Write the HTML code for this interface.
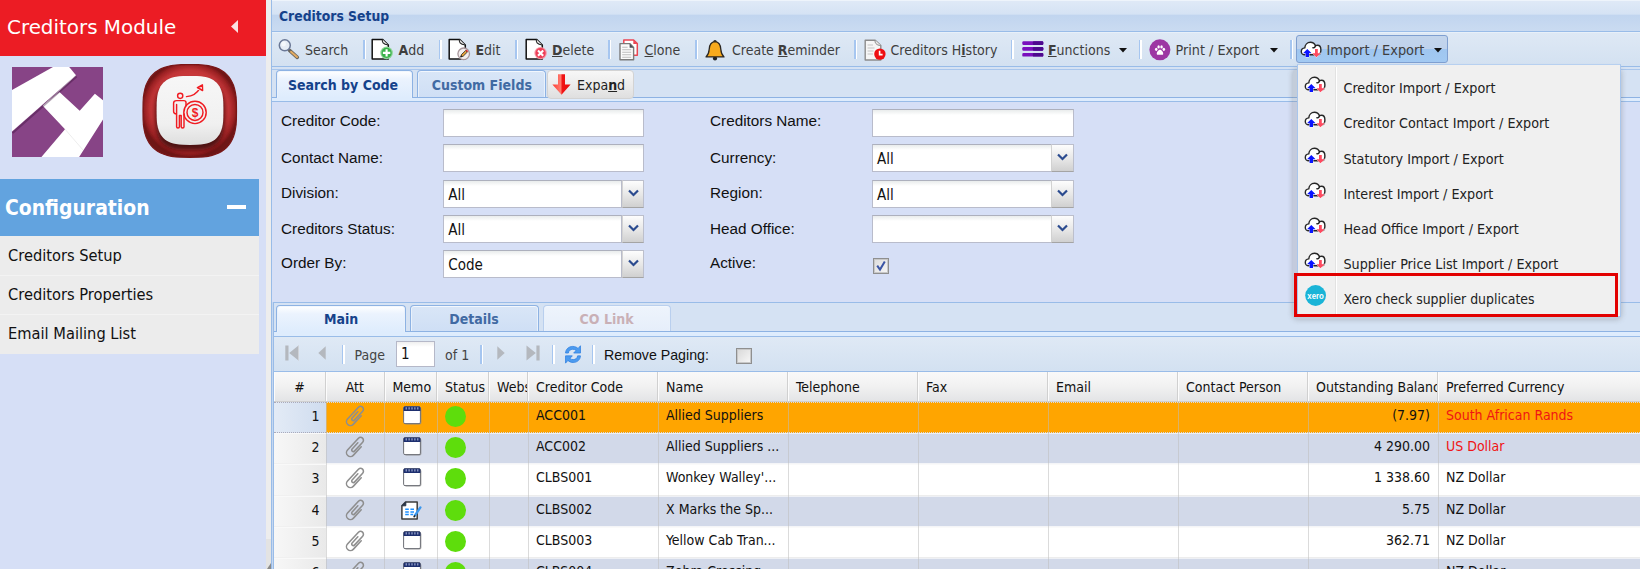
<!DOCTYPE html>
<html>
<head>
<meta charset="utf-8">
<title>Creditors Setup</title>
<style>
*{box-sizing:border-box;margin:0;padding:0}
html,body{width:1640px;height:569px;overflow:hidden;background:#d6dff6}
body{position:relative;font-family:"DejaVu Sans Condensed","DejaVu Sans","Liberation Sans",sans-serif;font-size:14px;color:#222}
.abs{position:absolute}
/* ---------- sidebar ---------- */
#side{left:0;top:0;width:266px;height:569px;background:#d6dff6}
#sidehead{left:0;top:0;width:266px;height:56px;background:#ec1c24}
#sidehead .t{left:7px;top:15px;font:19.9px/26px "DejaVu Sans","Liberation Sans",sans-serif;color:#fff;white-space:nowrap}
#cfg{left:0;top:179px;width:259px;height:57px;background:#62a3df}
#cfg .t{left:5px;top:14.6px;font:bold 20.9px/28px "DejaVu Sans Condensed","DejaVu Sans","Liberation Sans",sans-serif;color:#fff;white-space:nowrap}
#cfg .minus{left:227px;top:25.6px;width:18.5px;height:4.4px;background:#fff}
#menu{left:0;top:236px;width:259px;height:117.5px;background:#ececec}
#menu div{position:absolute;left:0;width:259px;height:39px;padding-left:8px;font:16.3px/40px "DejaVu Sans Condensed","DejaVu Sans","Liberation Sans",sans-serif;color:#111;white-space:nowrap}
#split{left:266px;top:0;width:5px;height:569px;background:#ededed}
/* ---------- main panel ---------- */
#main{left:271px;top:0;width:1369px;height:569px;background:#d6dff6;border-left:1px solid #99bce8}
#ptitle{left:272px;top:0;width:1368px;height:31px;background:linear-gradient(#e0eaf7 0,#d5e3f4 45%,#c1d5ef 50%,#cadbf1 100%);box-shadow:inset 0 1px 0 #eef4fb}
#ptitle .t{left:7px;top:8.4px;font:bold 13.8px/16px "DejaVu Sans Condensed","DejaVu Sans","Liberation Sans",sans-serif;color:#15428b;white-space:nowrap}
#tbar{left:272px;top:31px;width:1368px;height:36px;background:linear-gradient(#dfe9f5,#d3e1f1);border-bottom:1px solid #99bce8;box-shadow:inset 0 1px 0 #99bce8,inset 0 2px 0 #e8f0f9}
.tb{position:absolute;top:1px;height:35px;font:14px/36px "DejaVu Sans Condensed","Liberation Sans",sans-serif;color:#3e3e3e;white-space:nowrap}
.tb u{font-weight:bold}
.sep{position:absolute;top:9px;width:3px;height:19px;background:linear-gradient(90deg,#a6c6f0 0,#a6c6f0 50%,#fff 50%,#fff 100%);margin-left:-0.5px}

.ic{position:absolute}
#tabs1{left:272px;top:67px;width:1368px;height:35px;background:#d5e2f3}
.tabline{position:absolute;left:0;width:1368px}
.tab{position:absolute;height:27px;border:1px solid #8db2e3;border-bottom:none;border-radius:4px 4px 0 0;background:linear-gradient(#d9e6f7,#cfdff5);font:bold 14px/16px "DejaVu Sans Condensed","DejaVu Sans","Liberation Sans",sans-serif;color:#416aa3;text-align:center;white-space:nowrap;padding-top:5.8px;box-shadow:inset 0 1px 0 #f2f7fd,inset 1px 0 0 #e9f1fb,inset -1px 0 0 #e9f1fb}
.tab.act{background:linear-gradient(#ffffff 0,#ebf3fe 30%,#deecfd 100%);color:#15428b;height:28px}
.tab.dis{color:#c9b0b6;background:linear-gradient(#eef4fc,#e6eefa);border-color:#b9cfee}
#form{left:272px;top:102px;width:1368px;height:200px;background:#d6dff6}
.lbl{position:absolute;margin-top:-0.7px;font:15.3px/18px "Liberation Sans",sans-serif;color:#111;white-space:nowrap}
.inp{position:absolute;height:27.6px;background:linear-gradient(#e9ecec 0,#fff 5px,#fff 100%);border:1px solid #b9bccb;border-top-color:#adb0bd;font:15px/29px "DejaVu Sans Condensed","Liberation Sans",sans-serif;color:#111;padding-left:4px;white-space:nowrap}
.trg{position:absolute;width:22px;height:27.6px;background:linear-gradient(#fdfdfd,#e6e6e6 55%,#d0d0d0);border:1px solid #bcbfcc;border-left:1px solid #d2d2d2;border-bottom-color:#a4a4a4}
.trg svg{position:absolute;left:5px;top:8px}

#tabs2{left:274px;top:302px;width:1366px;height:35px;background:#d5e2f3}
#pbar{left:274px;top:337px;width:1366px;height:35px;background:linear-gradient(#dfe9f5,#d3e1f1);border-bottom:1px solid #99bce8}
#gframe{left:272px;top:302px;width:2px;height:267px;background:#c5d7f0;border-right:1px solid #99bce8}
#ghead{left:274px;top:372px;width:1366px;height:30px;background:linear-gradient(#f9f9f9 0,#f1f1f1 50%,#e3e4e6 100%);border-bottom:1px solid #d0d0d0}
.gh{position:absolute;top:0;height:29px;border-right:1px solid #d0d0d0;box-shadow:inset 1px 0 0 #fcfcfc;font:14px/30.5px "DejaVu Sans Condensed","Liberation Sans",sans-serif;color:#111;padding-left:8px;white-space:nowrap;overflow:hidden}
#gbody{left:274px;top:402px;width:1366px;height:167px;background:#fff;overflow:hidden}
.gr{position:absolute;left:0;width:1366px;background:#fff;border-top:1px solid #fafafa;border-bottom:1px solid #ededed}
.gr.alt{background:#d2d9e9;border-top-color:#eef0f5;border-bottom-color:#f4f5f8}
.gr.sel{background:#ffa500;border-top:1px dotted #d6dbe6;border-bottom:1px dotted #d6dbe6}
.num{position:absolute;left:0;top:-1px;bottom:-1px;width:52px;background:linear-gradient(90deg,#f7f7f7,#e9e9e9);border-top:1px solid #f9f9f9;border-bottom:1px solid #f0f0f0;text-align:right;padding-right:6.5px;font:14px/26.5px "DejaVu Sans Condensed","Liberation Sans",sans-serif;color:#111}
.gr.sel .num{background:linear-gradient(90deg,#e3ebf6,#cfdcef);border-top:1px dotted #aab;border-bottom:1px dotted #aab}
.gc{position:absolute;top:0;height:29px;padding-left:8px;font:14px/24.5px "DejaVu Sans Condensed","Liberation Sans",sans-serif;color:#111;white-space:nowrap;overflow:hidden}
.dot{position:absolute;left:171px;top:3.2px;width:21px;height:21px;border-radius:50%;background:#5edd0c}
.vl{position:absolute;top:0;width:1px;height:167px;background:rgba(190,190,190,.55)}

#ddshadow{left:1293px;top:69px;width:1330px;height:250px;width:328px;border-radius:5px;box-shadow:0 0 5px 1px rgba(100,100,100,.3);background:rgba(130,130,130,.22)}
#dd{left:1297px;top:64px;width:324px;height:253px;background:#f0f0f0;border:1px solid #a9c6ec;border-top-color:#b7d0f0;overflow:hidden}
#dd .gut{position:absolute;left:37px;top:2px;bottom:2px;width:2px;background:#e2e2e2;border-right:1px solid #fff}
.mi{position:absolute;left:45.5px;height:35px;font:14.2px/35px "DejaVu Sans Condensed","Liberation Sans",sans-serif;color:#222;white-space:nowrap}
#redbox{left:1294px;top:273px;width:324px;height:44px;border:3px solid #e20000}
</style>
</head>
<body>
<svg width="0" height="0" style="position:absolute"><defs>
<g id="cloud"><path d="M4.4 13.3C2 13.3 0.8 11.7 0.8 10C0.8 8 2.2 6.6 4.3 6.4C4.5 3.2 6.8 0.8 9.9 0.8C12.4 0.8 14.2 2.2 15 4.2C15.6 3.9 16.3 3.8 17 3.8C19.4 3.8 20.4 6 20.4 8.4C20.4 11.2 19 13.3 16.6 13.3Z" fill="#fff" stroke="#262626" stroke-width="1.4" stroke-linejoin="round"/><path d="M12.4 6.3C13.5 6.6 14.6 5.6 15 4.2" fill="none" stroke="#1d1d1d" stroke-width="1.4" stroke-linecap="round"/><path d="M6.8 7.4L11.1 11.8H8.5V15.5H5.1V11.8H2.5Z" fill="#0a14ff" stroke="#fff" stroke-width="0.7" paint-order="stroke"/><path d="M14.5 7.6H17.3V11.7H20.2L15.9 15.8L11.8 11.7H14.5Z" fill="#ff4a60" stroke="#fff" stroke-width="0.7" paint-order="stroke"/></g>
</defs></svg>
<div id="side" class="abs"></div>
<div id="sidehead" class="abs"><div class="t abs">Creditors Module</div>
<svg class="abs" style="left:230px;top:19px" width="9" height="15" viewBox="0 0 9 15"><path d="M8 1 L1 7.5 L8 14 Z" fill="#fbdfe0"/></svg>
</div>
<svg class="abs" style="left:12px;top:66.5px" width="91" height="90.5" viewBox="0 0 91 90.5"><rect width="91" height="90.5" fill="#874486"/>
<path d="M47.4 24.9L67.7 43.7L82.9 26.8L91 33.2V52.6L66.8 90.5H29L53 62.2L30.8 38.8Z" fill="#fff"/>
<path d="M64.6 9.6L0.6 65.9" stroke="rgba(50,10,50,.35)" stroke-width="2" fill="none"/><path d="M0 23.1L41 0H57.2L64 8.3L0 64.6Z" fill="#fff"/>
<path d="M64 8.3L30.8 38.8" stroke="#c9c9c9" stroke-width="0.9" opacity=".7"/><path d="M53 62.2L71 83" stroke="#dedede" stroke-width="0.7" opacity=".8"/>
</svg>
<svg class="abs" style="left:141px;top:62px" width="98" height="99" viewBox="0 0 98 99"><defs>
<radialGradient id="rg1" cx="50%" cy="48%" r="52%"><stop offset="0.6" stop-color="#d03d3f"/><stop offset="0.8" stop-color="#c23537"/><stop offset="0.92" stop-color="#9c2224"/><stop offset="1" stop-color="#6e1314"/></radialGradient>
<linearGradient id="wg" x1="0" y1="0" x2="0" y2="1"><stop offset="0" stop-color="#f7f7f7"/><stop offset="0.7" stop-color="#f0f0f0"/><stop offset="1" stop-color="#dedede"/></linearGradient>
<filter id="bl" x="-20%" y="-20%" width="140%" height="140%"><feGaussianBlur stdDeviation="2.6"/></filter>
<filter id="bl2" x="-20%" y="-20%" width="140%" height="140%"><feGaussianBlur stdDeviation="0.6"/></filter>
</defs>
<path d="M95.5 49.0L95.4 57.6L95.1 62.8L94.4 67.2L93.6 71.1L92.5 74.6L91.1 77.7L89.5 80.6L87.7 83.2L85.6 85.5L83.3 87.6L80.6 89.4L77.8 91.0L74.6 92.3L71.1 93.4L67.2 94.3L62.7 94.9L57.4 95.2L48.8 95.3L40.1 95.2L34.8 94.9L30.3 94.3L26.4 93.4L22.9 92.3L19.7 91.0L16.9 89.4L14.2 87.6L11.9 85.5L9.8 83.2L8.0 80.6L6.4 77.7L5.0 74.6L3.9 71.1L3.1 67.2L2.4 62.8L2.1 57.6L2.0 49.0L2.1 40.3L2.4 35.1L3.1 30.7L3.9 26.8L5.0 23.3L6.4 20.2L8.0 17.3L9.8 14.7L11.9 12.4L14.2 10.3L16.9 8.5L19.7 6.9L22.9 5.6L26.4 4.5L30.3 3.6L34.8 3.0L40.1 2.7L48.7 2.6L57.4 2.7L62.7 3.0L67.2 3.6L71.1 4.5L74.6 5.6L77.8 6.9L80.6 8.5L83.3 10.3L85.6 12.4L87.7 14.7L89.5 17.3L91.1 20.2L92.5 23.3L93.6 26.8L94.4 30.7L95.1 35.1L95.4 40.3Z" fill="url(#rg1)" stroke="#7a1718" stroke-width="1.2" filter="url(#bl2)"/>
<path d="M83.5 53.5L83.4 60.4L83.1 64.4L82.7 67.7L82.1 70.6L81.3 73.2L80.3 75.5L79.2 77.7L77.9 79.6L76.4 81.3L74.7 82.8L72.8 84.1L70.7 85.3L68.4 86.3L65.9 87.1L63.0 87.7L59.7 88.1L55.8 88.4L49.0 88.5L42.2 88.4L38.3 88.1L35.0 87.7L32.1 87.1L29.6 86.3L27.3 85.3L25.2 84.1L23.3 82.8L21.6 81.3L20.1 79.6L18.8 77.7L17.7 75.5L16.7 73.2L15.9 70.6L15.3 67.7L14.9 64.4L14.6 60.4L14.5 53.5L14.6 46.6L14.9 42.6L15.3 39.3L15.9 36.4L16.7 33.8L17.7 31.5L18.8 29.3L20.1 27.4L21.6 25.7L23.3 24.2L25.2 22.9L27.3 21.7L29.6 20.7L32.1 19.9L35.0 19.3L38.3 18.9L42.2 18.6L49.0 18.5L55.8 18.6L59.7 18.9L63.0 19.3L65.9 19.9L68.4 20.7L70.7 21.7L72.8 22.9L74.7 24.2L76.4 25.7L77.9 27.4L79.2 29.3L80.3 31.5L81.3 33.8L82.1 36.4L82.7 39.3L83.1 42.6L83.4 46.6Z" fill="#3d0b0c" opacity=".9" filter="url(#bl)"/>
<path d="M82.4 48.4L82.3 55.5L82.1 59.6L81.7 62.8L81.1 65.7L80.3 68.2L79.4 70.5L78.4 72.5L77.1 74.3L75.7 76.0L74.1 77.4L72.3 78.7L70.4 79.8L68.2 80.8L65.7 81.5L63.0 82.1L59.8 82.6L55.9 82.8L49.0 82.9L42.1 82.8L38.2 82.6L35.0 82.1L32.3 81.5L29.8 80.8L27.6 79.8L25.7 78.7L23.9 77.4L22.3 76.0L20.9 74.3L19.6 72.5L18.6 70.5L17.7 68.2L16.9 65.7L16.3 62.8L15.9 59.6L15.7 55.5L15.6 48.4L15.7 41.3L15.9 37.2L16.3 34.0L16.9 31.1L17.7 28.6L18.6 26.3L19.6 24.3L20.9 22.5L22.3 20.8L23.9 19.4L25.7 18.1L27.6 17.0L29.8 16.0L32.3 15.3L35.0 14.7L38.2 14.2L42.1 14.0L49.0 13.9L55.9 14.0L59.8 14.2L63.0 14.7L65.7 15.3L68.2 16.0L70.4 17.0L72.3 18.1L74.1 19.4L75.7 20.8L77.1 22.5L78.4 24.3L79.4 26.3L80.3 28.6L81.1 31.1L81.7 34.0L82.1 37.2L82.3 41.3Z" fill="url(#wg)"/>
<g fill="none" stroke="#f01c22" stroke-width="1.45" stroke-linejoin="round" stroke-linecap="round">
<circle cx="39.2" cy="33.8" r="2.6"/>
<path d="M35.6 38.6H42.8C44.4 38.6 45 39.4 45 40.6V43.5M43 52V64.8C43 66.4 40.2 66.4 40.2 64.8V53.5H38.4V64.8C38.4 66.4 35.6 66.4 35.6 64.8V52M35.6 52C34 52 32.6 51.4 32.6 49.6V41C32.6 39.4 33.6 38.6 35.6 38.6M35.6 42.5V52"/>
<circle cx="54" cy="50.4" r="11.2"/><circle cx="54" cy="50.4" r="8"/>
<path d="M45.5 34.6C51 34.4 56 31.4 59 26.2M56.4 25.6L61.4 22.8L61.6 28.6Z"/>
</g>
<text x="54" y="54.8" text-anchor="middle" font-family="Liberation Sans, sans-serif" font-weight="bold" font-size="12" fill="#f01c22">$</text>
</svg>
<div id="cfg" class="abs"><div class="t abs">Configuration</div><div class="minus abs"></div></div>
<div id="menu" class="abs">
<div style="top:0">Creditors Setup</div>
<div style="top:39px;box-shadow:inset 0 1px 0 #f3f3f3">Creditors Properties</div>
<div style="top:78px;box-shadow:inset 0 1px 0 #f3f3f3">Email Mailing List</div>
</div>
<div id="split" class="abs"><div class="abs" style="left:0;top:539px;width:5px;height:30px;background:#e3e3e3"></div><svg class="abs" style="left:1px;top:563px" width="4" height="6" viewBox="0 0 4 6"><path d="M4 0V6H0Z" fill="#8a8a8a"/></svg></div>
<div id="main" class="abs"></div>
<div id="ptitle" class="abs"><div class="t abs">Creditors Setup</div></div>
<div id="tbar" class="abs">
<!-- search -->
<svg class="ic" style="left:6px;top:6.8px" width="22" height="22" viewBox="0 0 22 22"><line x1="11.5" y1="12.3" x2="19.3" y2="19.3" stroke="#6b675f" stroke-width="3.6" stroke-linecap="round"/><line x1="13" y1="13.8" x2="19" y2="19" stroke="#e3ab62" stroke-width="2" stroke-linecap="round"/><circle cx="6.8" cy="7.3" r="5.5" fill="#e6ecf5" stroke="#6a7896" stroke-width="1.5"/><circle cx="5.6" cy="6" r="2.4" fill="#f5f8fc"/></svg>
<div class="tb" style="left:33px">Search</div>
<div class="sep" style="left:91px"></div>
<!-- add -->
<svg class="ic" style="left:99px;top:6.8px" width="23" height="23" viewBox="0 0 23 23"><path d="M1.2 1.4H11.5L17.3 7V21H1.2Z" fill="#fff" stroke="#111" stroke-width="1.5" stroke-linejoin="round"/><path d="M11.5 1.4C10.6 3.6 12 6.6 17.3 7" fill="#f4f4f4" stroke="#222" stroke-width="1.1"/><circle cx="15.6" cy="14.9" r="6.3" fill="#8fd598"/><circle cx="15.6" cy="14.9" r="5.1" fill="#38b24a"/><path d="M15.6 11.2V18.6M11.9 14.9H19.3" stroke="#fff" stroke-width="2.1"/></svg>
<div class="tb" style="left:126.5px"><b>A</b>dd</div>
<div class="sep" style="left:167.5px"></div>
<!-- edit -->
<svg class="ic" style="left:176px;top:6.8px" width="23" height="23" viewBox="0 0 23 23"><path d="M1.2 1.4H11.5L17.3 7V21H1.2Z" fill="#fff" stroke="#111" stroke-width="1.5" stroke-linejoin="round"/><path d="M11.5 1.4C10.6 3.6 12 6.6 17.3 7" fill="#f4f4f4" stroke="#222" stroke-width="1.1"/><g transform="translate(0.3,0.9)"><circle cx="15.4" cy="14.9" r="5.8" fill="#f3eeee" stroke="#a8969b" stroke-width="1.3"/><path d="M12.3 18.2L13.2 15.6L17.4 11.6L19 13.2L14.9 17.3Z" fill="#e8a33a" stroke="#222" stroke-width="0.8"/><path d="M12.3 18.2L12.9 16.4L14.1 17.6Z" fill="#111"/><path d="M17.4 11.6L18.3 10.8L19.8 12.3L19 13.2Z" fill="#f01822"/></g></svg>
<div class="tb" style="left:203.5px"><b>E</b>dit</div>
<div class="sep" style="left:243.5px"></div>
<!-- delete -->
<svg class="ic" style="left:253px;top:6.8px" width="23" height="23" viewBox="0 0 23 23"><path d="M1.2 1.4H11.5L17.3 7V21H1.2Z" fill="#fff" stroke="#111" stroke-width="1.5" stroke-linejoin="round"/><path d="M11.5 1.4C10.6 3.6 12 6.6 17.3 7" fill="#f4f4f4" stroke="#222" stroke-width="1.1"/><circle cx="15.6" cy="15.1" r="6.2" fill="#f596a3"/><circle cx="15.6" cy="15.1" r="5.1" fill="#ee3f58"/><path d="M13 12.5L18.2 17.7M18.2 12.5L13 17.7" stroke="#fff" stroke-width="2.1"/></svg>
<div class="tb" style="left:280px"><u>D</u>elete</div>
<div class="sep" style="left:336px"></div>
<!-- clone -->
<svg class="ic" style="left:347px;top:7.6px" width="21" height="22" viewBox="0 0 21 22"><path d="M4.8 1H14.6L18.3 4.6V16.2H4.8Z" fill="#fff" stroke="#ea4653" stroke-width="1.5" stroke-linejoin="round"/><path d="M14.3 1V4.9H18.3Z" fill="#ea4653"/><path d="M1 4.6H10.8L14.6 8.4V20.8H1Z" fill="#fbfbfb" stroke="#7b7b7b" stroke-width="1.4" stroke-linejoin="round"/><path d="M10.6 4.6V8.7H14.6Z" fill="#4a4f57"/><path d="M3.2 8.2H8.6M3.2 10.8H12.2M3.2 13.3H12.2M3.2 15.8H12.2M3.2 18.2H12.2" stroke="#bdbdbd" stroke-width="1.1"/></svg>
<div class="tb" style="left:372.5px"><u style="font-weight:normal">C</u>lone</div>
<div class="sep" style="left:423px"></div>
<!-- bell -->
<svg class="ic" style="left:433.3px;top:7.5px" width="20" height="23" viewBox="0 0 20 23"><circle cx="10" cy="19.4" r="2.1" fill="#222"/><circle cx="10" cy="2.6" r="1.7" fill="#222"/><path d="M10 2.6C5.2 2.9 4.4 6.8 4.2 10.2C4 13.6 3.2 15.9 1 17.9H19C16.8 15.9 16 13.6 15.8 10.2C15.6 6.8 14.8 2.9 10 2.6Z" fill="#f8aa1d" stroke="#2a2622" stroke-width="1.3" stroke-linejoin="round"/></svg>
<div class="tb" style="left:460px">Create <u>R</u>eminder</div>
<div class="sep" style="left:582px"></div>
<!-- history -->
<svg class="ic" style="left:591.6px;top:7.5px" width="23" height="23" viewBox="0 0 23 23"><path d="M1.2 1.2H11.2L16.8 6.6V21H1.2Z" fill="#f6f6f6" stroke="#8c8c8c" stroke-width="1.4" stroke-linejoin="round"/><path d="M11.2 1.2C10.6 3.6 12 6.2 16.8 6.6" fill="#ececec" stroke="#8c8c8c" stroke-width="1"/><path d="M3.6 6H9M3.6 9H10.5M3.6 12H9.5M3.6 15H9" stroke="#c4c4c4" stroke-width="1.1"/><circle cx="15.9" cy="15.1" r="5.7" fill="#ee0f12"/><path d="M15.6 11.8V15.6H18.6" stroke="#fff" stroke-width="1.6" fill="none"/></svg>
<div class="tb" style="left:618.5px">Creditors H<u>i</u>story</div>
<div class="sep" style="left:739.5px"></div>
<!-- functions -->
<svg class="ic" style="left:749.6px;top:10.4px" width="22" height="16" viewBox="0 0 22 16"><rect x="0.3" y="0.3" width="21" height="3.7" rx="1.2" fill="#7a10bd"/><rect x="10.8" y="0.3" width="10.5" height="3.7" rx="1.2" fill="#4d0a8e"/><rect x="0.3" y="6.1" width="21" height="3.7" rx="1.2" fill="#7a10bd"/><rect x="10.8" y="6.1" width="10.5" height="3.7" rx="1.2" fill="#4d0a8e"/><rect x="0.3" y="11.9" width="21" height="3.7" rx="1.2" fill="#7a10bd"/><rect x="10.8" y="11.9" width="10.5" height="3.7" rx="1.2" fill="#4d0a8e"/></svg>
<div class="tb" style="left:776px"><u>F</u>unctions</div>
<svg class="ic" style="left:846.8px;top:17px" width="8" height="5" viewBox="0 0 8 5"><path d="M0 0H8L4 4.4Z" fill="#111"/></svg>
<div class="sep" style="left:867px"></div>
<!-- print -->
<svg class="ic" style="left:876.6px;top:7.5px" width="22" height="22" viewBox="0 0 22 22"><circle cx="10.9" cy="10.8" r="10.5" fill="#9c36a3"/><g transform="translate(11 11.6) scale(0.82) translate(-11 -11.2)"><ellipse cx="6.4" cy="9.7" rx="1.5" ry="1.9" fill="#fff"/><ellipse cx="9.3" cy="6.7" rx="1.5" ry="2" fill="#fff"/><ellipse cx="12.9" cy="6.7" rx="1.5" ry="2" fill="#fff"/><ellipse cx="15.7" cy="9.7" rx="1.5" ry="1.9" fill="#fff"/><path d="M11 10.2C13.2 10.2 15.2 13.4 14.9 15.2C14.6 16.9 12.6 16.2 11 16.2C9.4 16.2 7.4 16.9 7.1 15.2C6.8 13.4 8.8 10.2 11 10.2Z" fill="#fff"/></g></svg>
<div class="tb" style="left:903.5px;font-size:14.25px">Print / Export</div>
<svg class="ic" style="left:997.8px;top:17px" width="8" height="5" viewBox="0 0 8 5"><path d="M0 0H8L4 4.4Z" fill="#111"/></svg>
<div class="sep" style="left:1018px"></div>
<!-- import (pressed) -->
<div class="abs" id="impbtn" style="left:1024px;top:4px;width:152px;height:28px;border:1px solid #7f9fd0;border-radius:3px;background:linear-gradient(#c3d5ec 0,#bfd2ec 48%,#9fc6f0 52%,#a2c9f2 100%)"></div>
<svg class="ic" style="left:1027.5px;top:9.9px" width="22" height="17" viewBox="-0.5 -0.5 22 17"><use href="#cloud"/></svg>
<div class="tb" style="left:1054.5px;font-size:14.4px">Import / Export</div>
<svg class="ic" style="left:1161.6px;top:17px" width="8" height="5" viewBox="0 0 8 5"><path d="M0 0H8L4 4.4Z" fill="#111"/></svg>
</div>

<div id="tabs1" class="abs">
<div class="tabline" style="top:2px;height:1px;background:#a9c6ec"></div>
<div class="tabline" style="top:30px;height:1px;background:#8db2e3"></div>
<div class="tabline" style="top:31px;height:3px;background:#deecfd"></div>
<div class="tabline" style="top:34px;height:1px;background:#99bce8"></div>
<div class="tab act" style="left:4px;top:3px;width:137px;padding-right:3px">Search by Code</div>
<div class="tab" style="left:145.3px;top:3px;width:129px">Custom Fields</div>
<div class="abs" style="left:275px;top:2.6px;width:87px;height:29px;border:1px solid #d3d3d3;border-radius:4px;background:linear-gradient(#f7f7f7,#ececec 50%,#dfdfdf)"></div>
<svg class="ic" style="left:279.5px;top:7px" width="19" height="21" viewBox="0 0 19 21"><defs><linearGradient id="rg" x1="0" y1="0" x2="1" y2="0"><stop offset="0" stop-color="#ff3b30"/><stop offset="0.45" stop-color="#ff7a6e"/><stop offset="0.55" stop-color="#f01414"/><stop offset="1" stop-color="#e80c0c"/></linearGradient></defs><path d="M6 0.3H13V10.5H18.6L9.5 20.7L0.4 10.5H6Z" fill="url(#rg)"/></svg>
<div class="abs" style="left:305px;top:1.3px;font:14px/35px 'DejaVu Sans Condensed','Liberation Sans',sans-serif;color:#222;white-space:nowrap">Expa<u style="font-weight:bold">n</u>d</div>
</div>
<div id="form" class="abs">
<div class="lbl" style="left:9px;top:10.4px">Creditor Code:</div>
<div class="lbl" style="left:9px;top:47.6px">Contact Name:</div>
<div class="lbl" style="left:9px;top:82.6px">Division:</div>
<div class="lbl" style="left:9px;top:118.2px">Creditors Status:</div>
<div class="lbl" style="left:9px;top:153.1px">Order By:</div>
<div class="lbl" style="left:438px;top:10.4px">Creditors Name:</div>
<div class="lbl" style="left:438px;top:47.6px">Currency:</div>
<div class="lbl" style="left:438px;top:82.6px">Region:</div>
<div class="lbl" style="left:438px;top:118.2px">Head Office:</div>
<div class="lbl" style="left:438px;top:153.1px">Active:</div>
<div class="inp" style="left:171.3px;top:7.3px;width:200.5px"></div>
<div class="inp" style="left:171.3px;top:42.3px;width:200.5px"></div>
<div class="inp" style="left:171.3px;top:78px;width:179px">All</div><div class="trg" style="left:349.5px;top:78px"><svg width="11" height="8" viewBox="0 0 11 8"><path d="M1 1.5L5.5 6L10 1.5" fill="none" stroke="#2b4b8f" stroke-width="2.2"/></svg></div>
<div class="inp" style="left:171.3px;top:113px;width:179px">All</div><div class="trg" style="left:349.5px;top:113px"><svg width="11" height="8" viewBox="0 0 11 8"><path d="M1 1.5L5.5 6L10 1.5" fill="none" stroke="#2b4b8f" stroke-width="2.2"/></svg></div>
<div class="inp" style="left:171.3px;top:148px;width:179px">Code</div><div class="trg" style="left:349.5px;top:148px"><svg width="11" height="8" viewBox="0 0 11 8"><path d="M1 1.5L5.5 6L10 1.5" fill="none" stroke="#2b4b8f" stroke-width="2.2"/></svg></div>
<div class="inp" style="left:600px;top:7.3px;width:201.6px"></div>
<div class="inp" style="left:600px;top:42.3px;width:179.5px">All</div><div class="trg" style="left:778.6px;width:23px;top:42.3px"><svg width="11" height="8" viewBox="0 0 11 8"><path d="M1 1.5L5.5 6L10 1.5" fill="none" stroke="#2b4b8f" stroke-width="2.2"/></svg></div>
<div class="inp" style="left:600px;top:78px;width:179.5px">All</div><div class="trg" style="left:778.6px;width:23px;top:78px"><svg width="11" height="8" viewBox="0 0 11 8"><path d="M1 1.5L5.5 6L10 1.5" fill="none" stroke="#2b4b8f" stroke-width="2.2"/></svg></div>
<div class="inp" style="left:600px;top:113px;width:179.5px"></div><div class="trg" style="left:778.6px;width:23px;top:113px"><svg width="11" height="8" viewBox="0 0 11 8"><path d="M1 1.5L5.5 6L10 1.5" fill="none" stroke="#2b4b8f" stroke-width="2.2"/></svg></div>
<div class="abs" style="left:601px;top:155.5px;width:16px;height:16px;border:1px solid #8f8f8f;background:linear-gradient(135deg,#dcdcdc,#f6f6f6);box-shadow:inset 0 0 0 1px #c8c8c8"><svg class="abs" style="left:1px;top:1px" width="12" height="12" viewBox="0 0 12 12"><path d="M2.2 5.6L5 9.6L9.8 1.6" fill="none" stroke="#3b55a5" stroke-width="2"/></svg></div>
</div>
<div id="gframe" class="abs"></div>
<div id="tabs2" class="abs">
<div class="tabline" style="top:0;height:1px;background:#99bce8"></div>
<div class="tabline" style="top:29px;height:1px;background:#8db2e3"></div>
<div class="tabline" style="top:30px;height:4px;background:#deecfd"></div>
<div class="tabline" style="top:34px;height:1px;background:#99bce8"></div>
<div class="tab act" style="left:2.3px;top:3px;width:129.5px;height:27px;padding-top:4.9px">Main</div>
<div class="tab" style="left:135.5px;top:3px;width:129px;height:26px;padding-top:4.9px">Details</div>
<div class="tab dis" style="left:268.6px;top:3px;width:128px;height:26px;padding-top:4.9px">CO Link</div>
</div>
<div id="pbar" class="abs">
<svg class="ic" style="left:11px;top:8.4px" width="14" height="16" viewBox="0 0 14 16"><rect x="0.3" y="0.5" width="3.2" height="15" fill="#b4b8be"/><path d="M13.5 0.5V15.5L4.2 8Z" fill="#b4b8be"/><path d="M13.5 0.5V15.5" stroke="#d0d3d8" stroke-width="1"/></svg>
<svg class="ic" style="left:44px;top:9.4px" width="8" height="14" viewBox="0 0 8 14"><path d="M7.7 0.3V13.7L0.3 7Z" fill="#b4b8be"/></svg>
<div class="sep" style="left:68.5px;top:8px"></div>
<div class="abs" style="left:80.5px;top:1px;font:14px/35px 'DejaVu Sans Condensed','Liberation Sans',sans-serif;color:#444;white-space:nowrap">Page</div>
<div class="abs" style="left:122px;top:4px;width:39px;height:25.5px;border:1px solid #b5b8c8;background:linear-gradient(#efefef 0,#fff 5px);font:15px/24px 'DejaVu Sans Condensed','Liberation Sans',sans-serif;padding-left:4px;color:#111">1</div>
<div class="abs" style="left:171px;top:1px;font:14px/35px 'DejaVu Sans Condensed','Liberation Sans',sans-serif;color:#444;white-space:nowrap">of 1</div>
<div class="sep" style="left:206.5px;top:8px"></div>
<svg class="ic" style="left:223px;top:9.4px" width="8" height="14" viewBox="0 0 8 14"><path d="M0.3 0.3V13.7L7.7 7Z" fill="#b4b8be"/></svg>
<svg class="ic" style="left:252px;top:8.4px" width="14" height="16" viewBox="0 0 14 16"><rect x="10.4" y="0.5" width="3.2" height="15" fill="#b4b8be"/><path d="M0.5 0.5V15.5L9.8 8Z" fill="#b4b8be"/></svg>
<div class="sep" style="left:278px;top:8px"></div>
<svg class="ic" style="left:288px;top:7.3px" width="22" height="20.9" viewBox="0 0 20 19"><path d="M3.2 8.2C3.4 4.6 6.2 2.2 9.8 2.2C11.8 2.2 13.4 2.9 14.6 4.1L16.8 1.6V8.2H10.6L12.8 5.9C12 5.2 11 4.8 9.8 4.8C7.6 4.8 6 6.2 5.8 8.2Z" fill="#4b9bf0" stroke="#2f7fe0" stroke-width="0.7" stroke-linejoin="round"/><path d="M16.8 10.8C16.6 14.4 13.8 16.8 10.2 16.8C8.2 16.8 6.6 16.1 5.4 14.9L3.2 17.4V10.8H9.4L7.2 13.1C8 13.8 9 14.2 10.2 14.2C12.4 14.2 14 12.8 14.2 10.8Z" fill="#4b9bf0" stroke="#2f7fe0" stroke-width="0.7" stroke-linejoin="round"/></svg>
<div class="sep" style="left:318.5px;top:8px"></div>
<div class="lbl" style="left:330px;top:9.8px;font-size:14.2px">Remove Paging:</div>
<div class="abs" style="left:461.5px;top:10.5px;width:16px;height:16px;border:1px solid #8f8f8f;background:linear-gradient(135deg,#d8d8d8,#f8f8f8);box-shadow:inset 0 0 0 1px #c8c8c8"></div>
</div>
<div id="ghead" class="abs">
<div class="gh" style="left:0px;width:52px;text-align:center;padding:0">#</div>
<div class="gh" style="left:52px;width:58.5px;text-align:center;padding:0">Att</div>
<div class="gh" style="left:110.5px;width:52.5px">Memo</div>
<div class="gh" style="left:163px;width:52px">Status</div>
<div class="gh" style="left:215px;width:39px">Website</div>
<div class="gh" style="left:254px;width:130px">Creditor Code</div>
<div class="gh" style="left:384px;width:130px">Name</div>
<div class="gh" style="left:514px;width:130px">Telephone</div>
<div class="gh" style="left:644px;width:130px">Fax</div>
<div class="gh" style="left:774px;width:130px">Email</div>
<div class="gh" style="left:904px;width:130px">Contact Person</div>
<div class="gh" style="left:1034px;width:130px">Outstanding Balance</div>
<div class="gh" style="left:1164px;width:222px">Preferred Currency</div>
</div>
<div id="gbody" class="abs">
<div class="gr sel" style="top:0px;height:31px">
<div class="num">1</div>
<svg class="ic" style="left:71px;top:2px" width="22" height="23" viewBox="0 0 22 23"><path d="M13 3.25L3.25 3.25A3.25 3.25 0 0 1 3.25 -3.25L16.6 -3.25A2.4 2.4 0 0 1 16.6 1.55L6.5 1.55A1.3 1.3 0 0 1 6.5 -1.05L13.5 -1.05" fill="none" stroke="#8e8e8e" stroke-width="1.3" stroke-linecap="round" transform="translate(10.5 11.2) rotate(-47) scale(1.2) translate(-9.5 0)"/></svg>
<svg class="ic" style="left:129px;top:3px" width="19" height="19" viewBox="0 0 19 19"><rect x="1.6" y="1.4" width="16.8" height="17" rx="1.6" fill="#8a8a8a" opacity=".75"/><rect x="0.6" y="0.6" width="16.8" height="17" rx="1.4" fill="#fff" stroke="#6e7077" stroke-width="1"/><path d="M0.6 2C0.6 1 1.2 0.4 2 0.4H16C16.8 0.4 17.4 1 17.4 2V5H0.6Z" fill="#1d2f6f"/><path d="M3.2 1.3V3.6M6.1 1.3V3.6M9 1.3V3.6M11.9 1.3V3.6M14.8 1.3V3.6" stroke="#a9b4d8" stroke-width="1.1"/></svg>
<div class="dot"></div>
<div class="gc" style="left:254px;width:130px">ACC001</div>
<div class="gc" style="left:384px;width:130px">Allied Suppliers</div>
<div class="gc" style="left:1034px;width:130px;text-align:right;padding-right:8px">(7.97)</div>
<div class="gc" style="left:1164px;width:202px;color:#f01414">South African Rands</div>
</div>
<div class="gr alt" style="top:31px;height:31px">
<div class="num">2</div>
<svg class="ic" style="left:71px;top:2px" width="22" height="23" viewBox="0 0 22 23"><path d="M13 3.25L3.25 3.25A3.25 3.25 0 0 1 3.25 -3.25L16.6 -3.25A2.4 2.4 0 0 1 16.6 1.55L6.5 1.55A1.3 1.3 0 0 1 6.5 -1.05L13.5 -1.05" fill="none" stroke="#8e8e8e" stroke-width="1.3" stroke-linecap="round" transform="translate(10.5 11.2) rotate(-47) scale(1.2) translate(-9.5 0)"/></svg>
<svg class="ic" style="left:129px;top:3px" width="19" height="19" viewBox="0 0 19 19"><rect x="1.6" y="1.4" width="16.8" height="17" rx="1.6" fill="#8a8a8a" opacity=".75"/><rect x="0.6" y="0.6" width="16.8" height="17" rx="1.4" fill="#fff" stroke="#6e7077" stroke-width="1"/><path d="M0.6 2C0.6 1 1.2 0.4 2 0.4H16C16.8 0.4 17.4 1 17.4 2V5H0.6Z" fill="#1d2f6f"/><path d="M3.2 1.3V3.6M6.1 1.3V3.6M9 1.3V3.6M11.9 1.3V3.6M14.8 1.3V3.6" stroke="#a9b4d8" stroke-width="1.1"/></svg>
<div class="dot"></div>
<div class="gc" style="left:254px;width:130px">ACC002</div>
<div class="gc" style="left:384px;width:130px">Allied Suppliers ...</div>
<div class="gc" style="left:1034px;width:130px;text-align:right;padding-right:8px">4 290.00</div>
<div class="gc" style="left:1164px;width:202px;color:#f01414">US Dollar</div>
</div>
<div class="gr " style="top:62px;height:32px">
<div class="num">3</div>
<svg class="ic" style="left:71px;top:2px" width="22" height="23" viewBox="0 0 22 23"><path d="M13 3.25L3.25 3.25A3.25 3.25 0 0 1 3.25 -3.25L16.6 -3.25A2.4 2.4 0 0 1 16.6 1.55L6.5 1.55A1.3 1.3 0 0 1 6.5 -1.05L13.5 -1.05" fill="none" stroke="#8e8e8e" stroke-width="1.3" stroke-linecap="round" transform="translate(10.5 11.2) rotate(-47) scale(1.2) translate(-9.5 0)"/></svg>
<svg class="ic" style="left:129px;top:3px" width="19" height="19" viewBox="0 0 19 19"><rect x="1.6" y="1.4" width="16.8" height="17" rx="1.6" fill="#8a8a8a" opacity=".75"/><rect x="0.6" y="0.6" width="16.8" height="17" rx="1.4" fill="#fff" stroke="#6e7077" stroke-width="1"/><path d="M0.6 2C0.6 1 1.2 0.4 2 0.4H16C16.8 0.4 17.4 1 17.4 2V5H0.6Z" fill="#1d2f6f"/><path d="M3.2 1.3V3.6M6.1 1.3V3.6M9 1.3V3.6M11.9 1.3V3.6M14.8 1.3V3.6" stroke="#a9b4d8" stroke-width="1.1"/></svg>
<div class="dot"></div>
<div class="gc" style="left:254px;width:130px">CLBS001</div>
<div class="gc" style="left:384px;width:130px">Wonkey Walley'...</div>
<div class="gc" style="left:1034px;width:130px;text-align:right;padding-right:8px">1 338.60</div>
<div class="gc" style="left:1164px;width:202px">NZ Dollar</div>
</div>
<div class="gr alt" style="top:94px;height:31px">
<div class="num">4</div>
<svg class="ic" style="left:71px;top:2px" width="22" height="23" viewBox="0 0 22 23"><path d="M13 3.25L3.25 3.25A3.25 3.25 0 0 1 3.25 -3.25L16.6 -3.25A2.4 2.4 0 0 1 16.6 1.55L6.5 1.55A1.3 1.3 0 0 1 6.5 -1.05L13.5 -1.05" fill="none" stroke="#8e8e8e" stroke-width="1.3" stroke-linecap="round" transform="translate(10.5 11.2) rotate(-47) scale(1.2) translate(-9.5 0)"/></svg>
<svg class="ic" style="left:126.5px;top:3.6px" width="22" height="20" viewBox="0 0 22 20"><path d="M4.8 0.9H16.2V17.9H0.9V4.8Z" fill="#fff" stroke="#3c3c3c" stroke-width="1.5" stroke-linejoin="round"/><path d="M4.8 0.9V4.8H0.9Z" fill="#2b3648" stroke="#2b3648" stroke-width="1"/><path d="M4.2 8.2H7.8M4.2 10.9H7.8M4.2 13.5H7.8M9.4 8.2H13M9.4 10.9H13M9.4 13.5H12.2" stroke="#1e90ff" stroke-width="1.5"/><path d="M19.4 6.4L14 14.4" stroke="#3a97ee" stroke-width="2.4" stroke-linecap="round"/><path d="M13.6 15L13.1 15.7" stroke="#222" stroke-width="1.6" stroke-linecap="round"/></svg>
<div class="dot"></div>
<div class="gc" style="left:254px;width:130px">CLBS002</div>
<div class="gc" style="left:384px;width:130px">X Marks the Sp...</div>
<div class="gc" style="left:1034px;width:130px;text-align:right;padding-right:8px">5.75</div>
<div class="gc" style="left:1164px;width:202px">NZ Dollar</div>
</div>
<div class="gr " style="top:125px;height:31px">
<div class="num">5</div>
<svg class="ic" style="left:71px;top:2px" width="22" height="23" viewBox="0 0 22 23"><path d="M13 3.25L3.25 3.25A3.25 3.25 0 0 1 3.25 -3.25L16.6 -3.25A2.4 2.4 0 0 1 16.6 1.55L6.5 1.55A1.3 1.3 0 0 1 6.5 -1.05L13.5 -1.05" fill="none" stroke="#8e8e8e" stroke-width="1.3" stroke-linecap="round" transform="translate(10.5 11.2) rotate(-47) scale(1.2) translate(-9.5 0)"/></svg>
<svg class="ic" style="left:129px;top:3px" width="19" height="19" viewBox="0 0 19 19"><rect x="1.6" y="1.4" width="16.8" height="17" rx="1.6" fill="#8a8a8a" opacity=".75"/><rect x="0.6" y="0.6" width="16.8" height="17" rx="1.4" fill="#fff" stroke="#6e7077" stroke-width="1"/><path d="M0.6 2C0.6 1 1.2 0.4 2 0.4H16C16.8 0.4 17.4 1 17.4 2V5H0.6Z" fill="#1d2f6f"/><path d="M3.2 1.3V3.6M6.1 1.3V3.6M9 1.3V3.6M11.9 1.3V3.6M14.8 1.3V3.6" stroke="#a9b4d8" stroke-width="1.1"/></svg>
<div class="dot"></div>
<div class="gc" style="left:254px;width:130px">CLBS003</div>
<div class="gc" style="left:384px;width:130px">Yellow Cab Tran...</div>
<div class="gc" style="left:1034px;width:130px;text-align:right;padding-right:8px">362.71</div>
<div class="gc" style="left:1164px;width:202px">NZ Dollar</div>
</div>
<div class="gr alt" style="top:156px;height:31px">
<div class="num">6</div>
<svg class="ic" style="left:71px;top:2px" width="22" height="23" viewBox="0 0 22 23"><path d="M13 3.25L3.25 3.25A3.25 3.25 0 0 1 3.25 -3.25L16.6 -3.25A2.4 2.4 0 0 1 16.6 1.55L6.5 1.55A1.3 1.3 0 0 1 6.5 -1.05L13.5 -1.05" fill="none" stroke="#8e8e8e" stroke-width="1.3" stroke-linecap="round" transform="translate(10.5 11.2) rotate(-47) scale(1.2) translate(-9.5 0)"/></svg>
<svg class="ic" style="left:129px;top:3px" width="19" height="19" viewBox="0 0 19 19"><rect x="1.6" y="1.4" width="16.8" height="17" rx="1.6" fill="#8a8a8a" opacity=".75"/><rect x="0.6" y="0.6" width="16.8" height="17" rx="1.4" fill="#fff" stroke="#6e7077" stroke-width="1"/><path d="M0.6 2C0.6 1 1.2 0.4 2 0.4H16C16.8 0.4 17.4 1 17.4 2V5H0.6Z" fill="#1d2f6f"/><path d="M3.2 1.3V3.6M6.1 1.3V3.6M9 1.3V3.6M11.9 1.3V3.6M14.8 1.3V3.6" stroke="#a9b4d8" stroke-width="1.1"/></svg>
<div class="dot"></div>
<div class="gc" style="left:254px;width:130px">CLBS004</div>
<div class="gc" style="left:384px;width:130px">Zebra Crossing ...</div>
<div class="gc" style="left:1034px;width:130px;text-align:right;padding-right:8px"></div>
<div class="gc" style="left:1164px;width:202px">NZ Dollar</div>
</div>
<div class="vl" style="left:51.5px"></div>
<div class="vl" style="left:110.0px"></div>
<div class="vl" style="left:162.5px"></div>
<div class="vl" style="left:214.5px"></div>
<div class="vl" style="left:253.5px"></div>
<div class="vl" style="left:383.5px"></div>
<div class="vl" style="left:513.5px"></div>
<div class="vl" style="left:643.5px"></div>
<div class="vl" style="left:773.5px"></div>
<div class="vl" style="left:903.5px"></div>
<div class="vl" style="left:1033.5px"></div>
<div class="vl" style="left:1163.5px"></div>
</div>
<div id="ddshadow" class="abs"></div>
<div id="dd" class="abs">
<div class="gut"></div>
<div class="mi" style="top:6.1px">Creditor Import / Export</div>
<svg class="ic" style="left:6.4px;top:11.1px" width="22" height="17" viewBox="-0.5 -0.5 22 17"><use href="#cloud"/></svg>
<div class="mi" style="top:41.3px">Creditor Contact Import / Export</div>
<svg class="ic" style="left:6.4px;top:46.3px" width="22" height="17" viewBox="-0.5 -0.5 22 17"><use href="#cloud"/></svg>
<div class="mi" style="top:76.5px">Statutory Import / Export</div>
<svg class="ic" style="left:6.4px;top:81.5px" width="22" height="17" viewBox="-0.5 -0.5 22 17"><use href="#cloud"/></svg>
<div class="mi" style="top:111.7px">Interest Import / Export</div>
<svg class="ic" style="left:6.4px;top:116.7px" width="22" height="17" viewBox="-0.5 -0.5 22 17"><use href="#cloud"/></svg>
<div class="mi" style="top:146.9px">Head Office Import / Export</div>
<svg class="ic" style="left:6.4px;top:151.9px" width="22" height="17" viewBox="-0.5 -0.5 22 17"><use href="#cloud"/></svg>
<div class="mi" style="top:182.1px">Supplier Price List Import / Export</div>
<svg class="ic" style="left:6.4px;top:187.1px" width="22" height="17" viewBox="-0.5 -0.5 22 17"><use href="#cloud"/></svg>
<div class="mi" style="top:216.9px;font-size:13.9px">Xero check supplier duplicates</div>
<svg class="ic" style="left:7px;top:219.7px" width="22" height="22" viewBox="0 0 22 22"><circle cx="10.6" cy="10.5" r="10.4" fill="#1ab4d7"/><text x="10.6" y="13.6" text-anchor="middle" font-family="Liberation Sans, sans-serif" font-weight="bold" font-size="8.6" fill="#fff" textLength="16.5" lengthAdjust="spacingAndGlyphs">xero</text></svg>
</div>
<div id="redbox" class="abs"></div>
</body>
</html>
